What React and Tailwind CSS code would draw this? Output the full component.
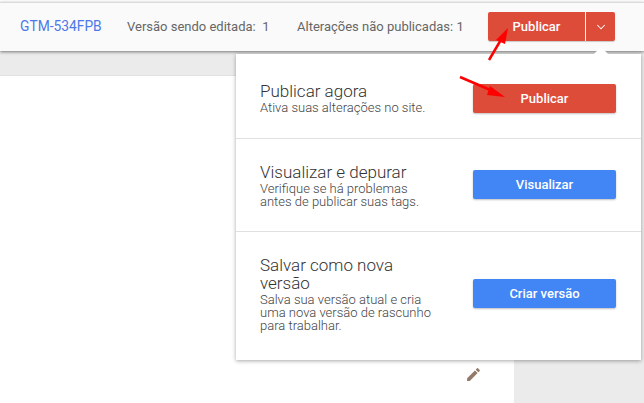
import React from 'react';
import { ChevronDown } from 'lucide-react';

const sections = [
  { title: 'Publicar agora', text: 'Ativa suas alterações no site.', button: 'Publicar', color: 'bg-[#dd4b39]', height: 'h-[84px]', textTop: 'pt-[28px]', buttonTop: 'mt-[30px]' },
  { title: 'Visualizar e depurar', text: 'Verifique se há problemas antes de publicar suas tags.', button: 'Visualizar', color: 'bg-[#4285f4]', height: 'h-[93px]', textTop: 'pt-[24px]', buttonTop: 'mt-[31px]' },
  { title: 'Salvar como nova versão', text: 'Salva sua versão atual e cria uma nova versão de rascunho para trabalhar.', button: 'Criar versão', color: 'bg-[#4285f4]', height: 'h-[129px]', textTop: 'pt-[24px]', buttonTop: 'mt-[47px]' },
];

const App = () => {
  return (
    <div className="relative w-[644px] h-[403px] overflow-hidden bg-white font-['Roboto',sans-serif]">
      {/* Barra superior */}
      <div className="relative z-10 h-[51px] pt-[2px] bg-white">
        <div className="h-[49px] border-t border-[#dcdcdc] bg-[#fafafa] shadow-[0_1px_3px_rgba(0,0,0,0.5)] flex items-center pl-[20px]">
          <span className="text-[13.8px] text-[#4d78e8] w-[107px] -mt-[1px]">GTM-534FPB</span>
          <span className="text-[13px] text-[#666] w-[170px]">Versão sendo editada:&nbsp; 1</span>
          <span className="text-[13px] text-[#666] w-[191px]">Alterações não publicadas: 1</span>
          <div className="flex h-[29px] rounded-[2px] overflow-hidden shadow-[0_1px_1px_rgba(0,0,0,0.2)] -mt-[1px]">
            <div className="w-[97px] bg-[#dd4b39] text-white text-[13px] font-medium flex items-center justify-center">Publicar</div>
            <div className="w-[29px] ml-[1px] bg-[#dd4b39] text-white flex items-center justify-center">
              <ChevronDown size={14} strokeWidth={1.75} />
            </div>
          </div>
        </div>
      </div>

      {/* Fundo da pagina */}
      <div className="flex h-[352px]">
        <div className="w-[514px] flex flex-col">
          <div className="h-[25px] bg-[#ebebeb] border-b border-[#e2e2e2]"></div>
          <div className="flex-1 bg-white"></div>
        </div>
        <div className="flex-1 bg-[#ebebeb]"></div>
      </div>

      {/* Painel de publicacao */}
      <div className="absolute z-20 left-[236px] top-[54px] w-[405px] h-[306px] bg-white shadow-[0_1px_4px_rgba(0,0,0,0.35)] flex flex-col">
        {sections.map((section, i) => (
          <div key={section.title} className={`${section.height} flex items-start pl-[24px] pr-[25px] ${i > 0 ? 'border-t border-[#e0e0e0]' : ''}`}>
            <div className={`w-[176px] ${section.textTop}`}>
              <h3 className="text-[17px] leading-[18px] mb-[1px] font-light text-[#333]">{section.title}</h3>
              <p className="text-[13px] leading-[13px] font-light text-[#444]">{section.text}</p>
            </div>
            <div className={`ml-auto ${section.buttonTop} w-[143px] h-[29px] rounded-[2px] ${section.color} text-white text-[13px] font-medium flex items-center justify-center shadow-[0_1px_2px_rgba(0,0,0,0.25)]`}>
              {section.button}
            </div>
          </div>
        ))}
      </div>

      {/* Seta do painel */}
      <div className="absolute z-20 left-[596px] top-[49px] w-[10px] h-[10px] bg-white rotate-45"></div>

      {/* Lapis */}
      <svg className="absolute z-10 left-[465px] top-[366px]" width="17" height="17" viewBox="0 0 24 24" fill="#93796a">
        <path d="M3 17.25V21h3.75L17.81 9.94l-3.75-3.75L3 17.25zM20.71 7.04a1 1 0 0 0 0-1.41l-2.34-2.34a1 1 0 0 0-1.41 0l-1.83 1.83 3.75 3.75 1.83-1.83z" />
      </svg>

      {/* Setas vermelhas */}
      <svg className="absolute z-30 left-0 top-0 pointer-events-none" width="644" height="403" fill="none">
        <path d="M489 60 L502 38" stroke="#f00" strokeWidth="2.5" />
        <path d="M508 28 L496 40 L505 44 Z" fill="#f00" />
        <path d="M460 77 L495 92" stroke="#f00" strokeWidth="2.5" />
        <path d="M505 97 L490 86 L487 95 Z" fill="#f00" />
      </svg>
    </div>
  );
};

export default App;
